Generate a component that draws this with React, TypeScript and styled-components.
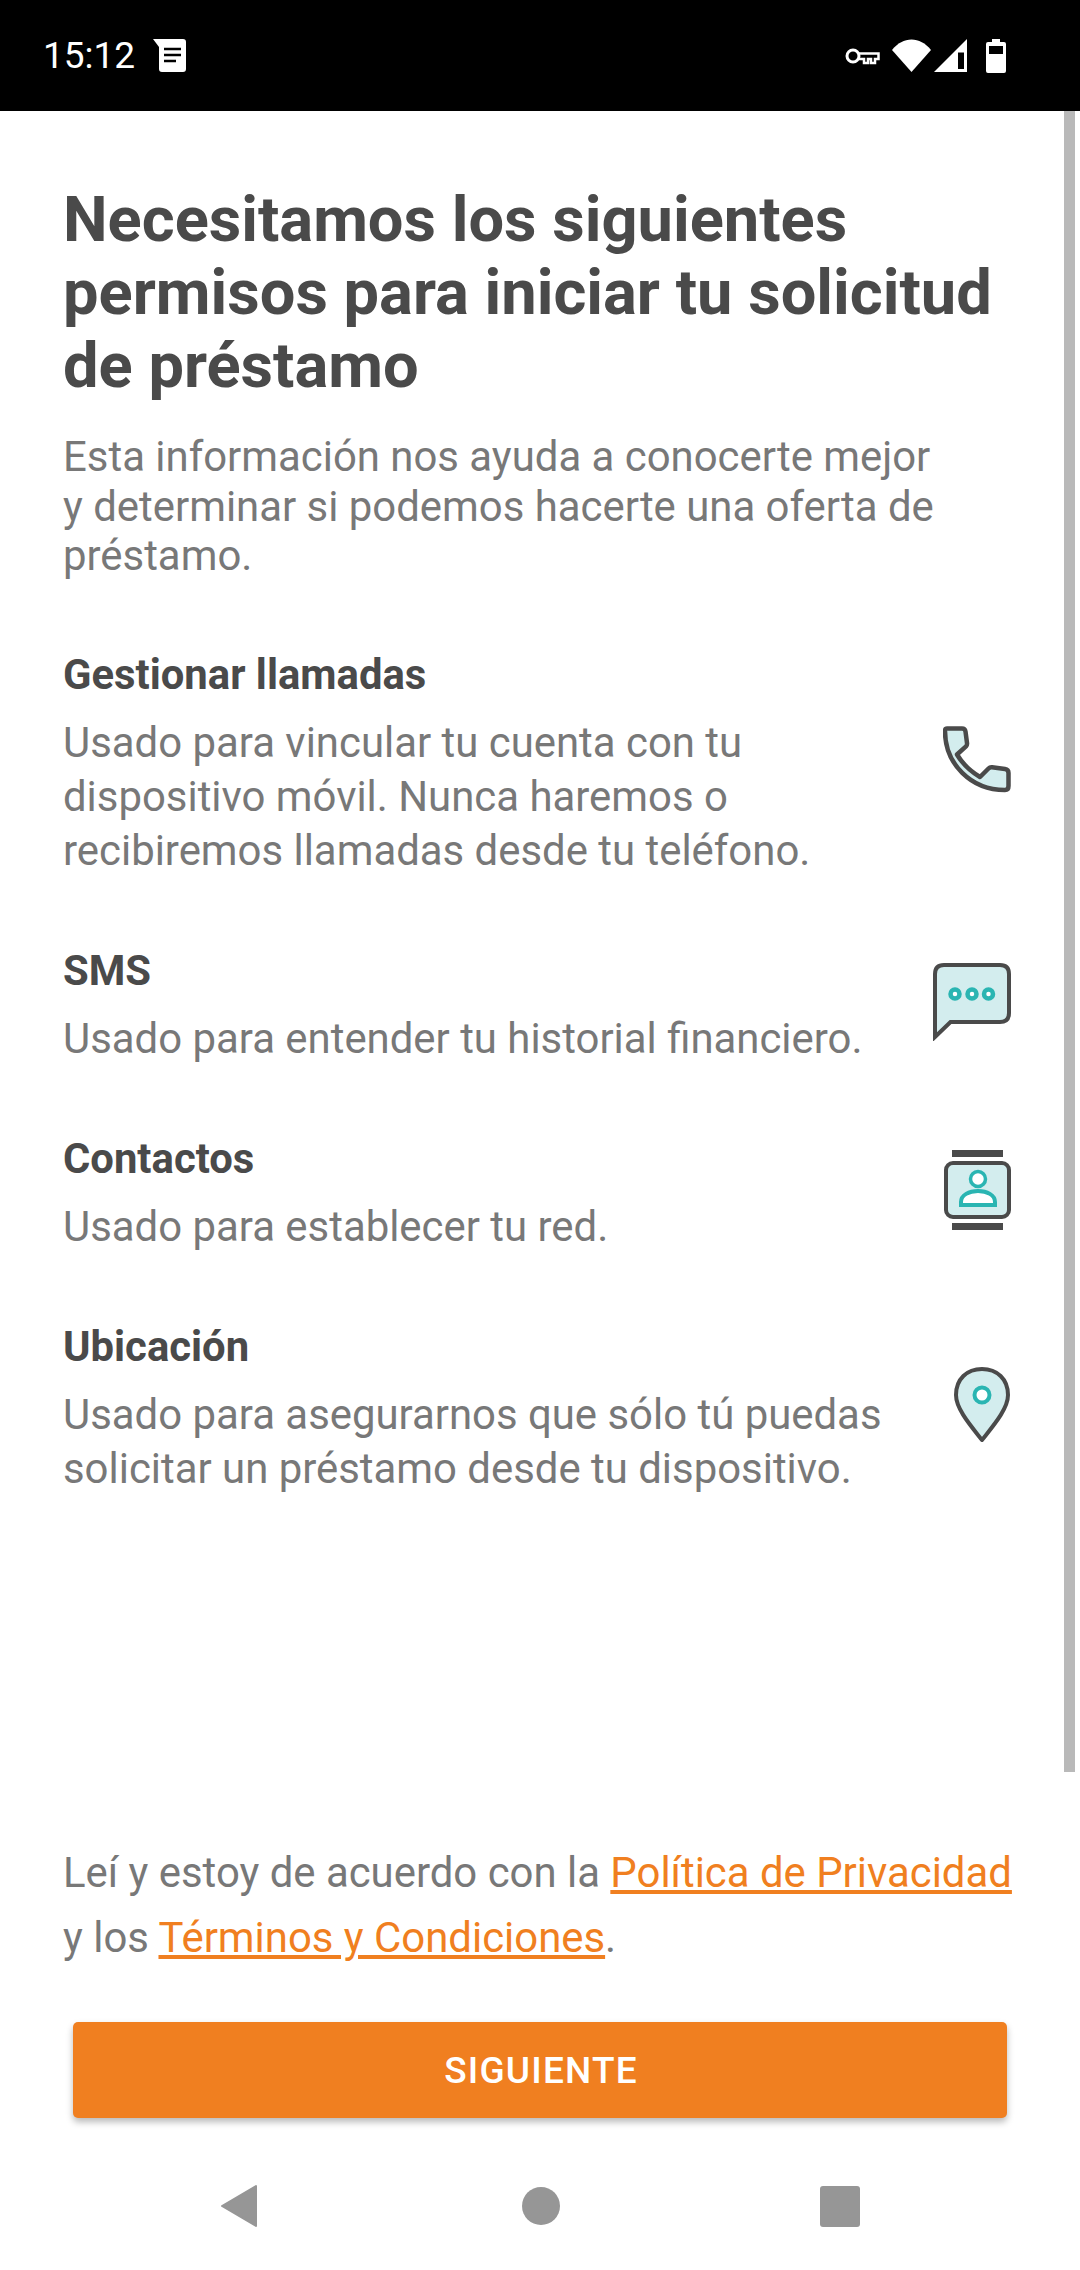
import React from 'react';
import styled, { createGlobalStyle } from 'styled-components';

const GlobalStyle = createGlobalStyle`
  html, body {
    margin: 0;
    padding: 0;
    background: #fff;
  }
  body {
    font-family: Roboto, "Noto Sans", sans-serif;
  }
`;

const INK = '#4a4a4a';
const TINT = '#d3edee';
const TEAL = '#2ab5b2';

const permissions = [
  {
    title: 'Gestionar llamadas',
    lines: ['Usado para vincular tu cuenta con tu', 'dispositivo móvil. Nunca haremos o', 'recibiremos llamadas desde tu teléfono.'],
    icon: 'phone',
  },
  { title: 'SMS', lines: ['Usado para entender tu historial financiero.'], icon: 'chat' },
  { title: 'Contactos', lines: ['Usado para establecer tu red.'], icon: 'contact' },
  {
    title: 'Ubicación',
    lines: ['Usado para asegurarnos que sólo tú puedas', 'solicitar un préstamo desde tu dispositivo.'],
    icon: 'pin',
  },
];

const PhoneIcon = () => (
  <svg width="68" height="68" viewBox="0 0 68 68">
    <path
      d="M4 2.5H19Q22 2.5 22.5 5.5L24 17Q24.300 19 23 20.300L14 28.500Q22 42 37 51L45.500 42.500Q47 41 49 41.300L62 43Q65.500 43.500 65.500 47V60Q65.500 64 62 64C28 64 2 38 2 5Q2 2.500 4 2.500Z"
      fill={TINT}
      stroke={INK}
      strokeWidth="4.500"
      strokeLinejoin="round"
    />
  </svg>
);

const ChatIcon = () => (
  <svg width="78" height="78" viewBox="0 0 78 78">
    <path
      d="M2 74V11Q2 2 11 2H67Q76 2 76 11V50Q76 59 67 59H17.500Z"
      fill={TINT}
      stroke={INK}
      strokeWidth="4"
    />
    <g fill="#fff" stroke={TEAL} strokeWidth="4.500">
      <circle cx="22" cy="31" r="4.500" />
      <circle cx="39" cy="31" r="4.500" />
      <circle cx="55.500" cy="31" r="4.500" />
    </g>
  </svg>
);

const ContactIcon = () => (
  <svg width="68" height="80" viewBox="0 0 68 80">
    <rect x="9" y="0" width="51" height="7" fill={INK} />
    <rect x="3" y="13" width="63" height="54" rx="7" fill={TINT} stroke={INK} strokeWidth="4" />
    <rect x="9" y="73" width="51" height="7" fill={INK} />
    <circle cx="35" cy="29" r="7.500" fill="#fff" stroke={TEAL} strokeWidth="3.500" />
    <path d="M18 55V52C18 45 26 41 35 41S52 45 52 52V55Z" fill="#fff" stroke={TEAL} strokeWidth="4" />
  </svg>
);

const PinIcon = () => (
  <svg width="58" height="78" viewBox="0 0 58 78">
    <path
      d="M29 74C18 60 3 43 3 29C3 13 14 3 29 3S55 13 55 29C55 43 40 60 29 74Z"
      fill={TINT}
      stroke={INK}
      strokeWidth="4"
      strokeLinejoin="round"
    />
    <circle cx="29" cy="29" r="7.500" fill="#fff" stroke={TEAL} strokeWidth="4" />
  </svg>
);

const iconMap: { [key: string]: React.ReactNode } = {
  phone: <PhoneIcon />,
  chat: <ChatIcon />,
  contact: <ContactIcon />,
  pin: <PinIcon />,
};

const App = () => (
  <Screen>
    <GlobalStyle />
    <StatusBar>
      <StatusLeft>
        <Clock>15:12</Clock>
        <svg width="33" height="33" viewBox="0 0 33 33">
          <path d="M0 0H30Q33 0 33 3V30Q33 33 30 33H9Q6 33 6 30V8Z" fill="#fff" />
          <path d="M11 10H28M11 16H28M11 22H23" stroke="#000" strokeWidth="2.500" />
        </svg>
      </StatusLeft>
      <StatusRight>
        <svg width="35" height="20" viewBox="0 0 35 20">
          <circle cx="8" cy="10" r="6" fill="none" stroke="#fff" strokeWidth="3" />
          <path d="M14 7.500H33.500V13H30V17H26V13H23V17H19V13H14" fill="none" stroke="#fff" strokeWidth="2.500" />
        </svg>
        <StatusGlyph $left={12}>
          <svg width="39" height="33" viewBox="0 0 39 33">
            <path d="M0 11C11 -3 28 -3 39 11L19.500 33Z" fill="#fff" />
          </svg>
        </StatusGlyph>
        <StatusGlyph $left={3}>
          <svg width="33" height="33" viewBox="0 0 33 33">
            <path d="M0 33L33 0V33Z" fill="#fff" />
            <path d="M24 13.500H30V30H24Z" fill="#000" />
          </svg>
        </StatusGlyph>
        <StatusGlyph $left={19}>
          <svg width="20" height="34" viewBox="0 0 20 34">
            <path d="M6 0H14V3H18Q20 3 20 5V32Q20 34 18 34H2Q0 34 0 32V5Q0 3 2 3H6Z" fill="#fff" />
            <rect x="3" y="7" width="14" height="8" fill="#000" />
          </svg>
        </StatusGlyph>
      </StatusRight>
    </StatusBar>

    <Body>
      <Scrollbar />
      <Title>
        Necesitamos los siguientes
        <br />
        permisos para iniciar tu solicitud
        <br />
        de préstamo
      </Title>
      <Intro>
        Esta información nos ayuda a conocerte mejor
        <br />
        y determinar si podemos hacerte una oferta de
        <br />
        préstamo.
      </Intro>
      <PermissionList>
        {permissions.map((p) => (
          <PermissionRow key={p.title}>
            <div>
              <PermissionTitle>{p.title}</PermissionTitle>
              <PermissionText>
                {p.lines.map((l) => (
                  <span key={l}>{l}</span>
                ))}
              </PermissionText>
            </div>
            <IconSlot>{iconMap[p.icon]}</IconSlot>
          </PermissionRow>
        ))}
      </PermissionList>
      <Legal>
        Leí y estoy de acuerdo con la <LegalLink>Política de Privacidad</LegalLink>
        <br />
        y los <LegalLink>Términos y Condiciones</LegalLink>.
      </Legal>
      <NextButton>SIGUIENTE</NextButton>
    </Body>

    <NavBar>
      <BackSlot>
        <svg width="38" height="44" viewBox="0 0 38 44">
          <path d="M36 2V42L2 22Z" fill="#969696" stroke="#969696" strokeWidth="2" strokeLinejoin="round" />
        </svg>
      </BackSlot>
      <svg width="38" height="38" viewBox="0 0 38 38">
        <circle cx="19" cy="19" r="19" fill="#969696" />
      </svg>
      <RecentsSlot>
        <svg width="40" height="41" viewBox="0 0 40 41">
          <rect width="40" height="41" rx="3" fill="#969696" />
        </svg>
      </RecentsSlot>
    </NavBar>
  </Screen>
);

export default App;

const Screen = styled.div`
  width: 1080px;
  height: 2270px;
  display: flex;
  flex-direction: column;
  overflow: hidden;
  background: #fff;
`;

const StatusBar = styled.header`
  height: 111px;
  flex: none;
  background: #000;
  display: flex;
  align-items: center;
  justify-content: space-between;
  padding: 0 74px 0 43px;
`;

const StatusLeft = styled.div`
  display: flex;
  align-items: center;
  gap: 18px;
`;

const Clock = styled.span`
  font-size: 37px;
  font-weight: 400;
  color: #fff;
`;

const StatusRight = styled.div`
  display: flex;
  align-items: center;
`;

const StatusGlyph = styled.span<{ $left: number }>`
  display: flex;
  margin-left: ${(p) => p.$left}px;
`;

const Body = styled.main`
  position: relative;
  flex: 1;
  display: flex;
  flex-direction: column;
  padding: 72px 69px 0 63px;
`;

const Scrollbar = styled.div`
  position: absolute;
  top: 0;
  right: 5px;
  width: 11px;
  height: 1661px;
  background: #b9b9b9;
`;

const Title = styled.h1`
  margin: 0;
  font-size: 63.2px;
  line-height: 73px;
  font-weight: 700;
  color: ${INK};
`;

const Intro = styled.p`
  margin: 30px 0 0;
  font-size: 41.9px;
  line-height: 49.5px;
  color: #787878;
`;

const PermissionList = styled.div`
  margin-top: 67px;
  display: flex;
  flex-direction: column;
  gap: 66px;
`;

const PermissionRow = styled.section`
  display: flex;
  align-items: center;
  justify-content: space-between;
`;

const IconSlot = styled.div`
  display: flex;
  margin-bottom: 6px;
`;

const PermissionTitle = styled.h2`
  margin: 0 0 14px;
  font-size: 41.8px;
  line-height: 54px;
  font-weight: 700;
  color: ${INK};
`;

const PermissionText = styled.div`
  font-size: 41.9px;
  line-height: 54px;
  color: #787878;
  span {
    display: block;
    white-space: nowrap;
  }
`;

const Legal = styled.p`
  margin: auto 0 0;
  font-size: 41.9px;
  line-height: 65px;
  color: #787878;
  white-space: nowrap;
`;

const LegalLink = styled.a`
  color: #f07f20;
  text-decoration: underline;
`;

const NextButton = styled.button`
  flex: none;
  height: 96px;
  margin: 52px 4px 32px 10px;
  padding: 0 0 0 2px;
  border: none;
  border-radius: 5px;
  background: #f07f20;
  color: #fff;
  font-family: Roboto, sans-serif;
  font-size: 37px;
  font-weight: 500;
  letter-spacing: 1.2px;
  box-shadow: 0 4px 7px rgba(0, 0, 0, 0.28);
`;

const NavBar = styled.nav`
  height: 112px;
  flex: none;
  display: grid;
  grid-template-columns: repeat(3, 300px);
  justify-items: center;
  align-items: center;
  padding: 0 0 8px 91px;
`;

const BackSlot = styled.span`
  display: flex;
  margin-right: 4px;
`;

const RecentsSlot = styled.span`
  display: flex;
  margin-right: 2px;
`;
